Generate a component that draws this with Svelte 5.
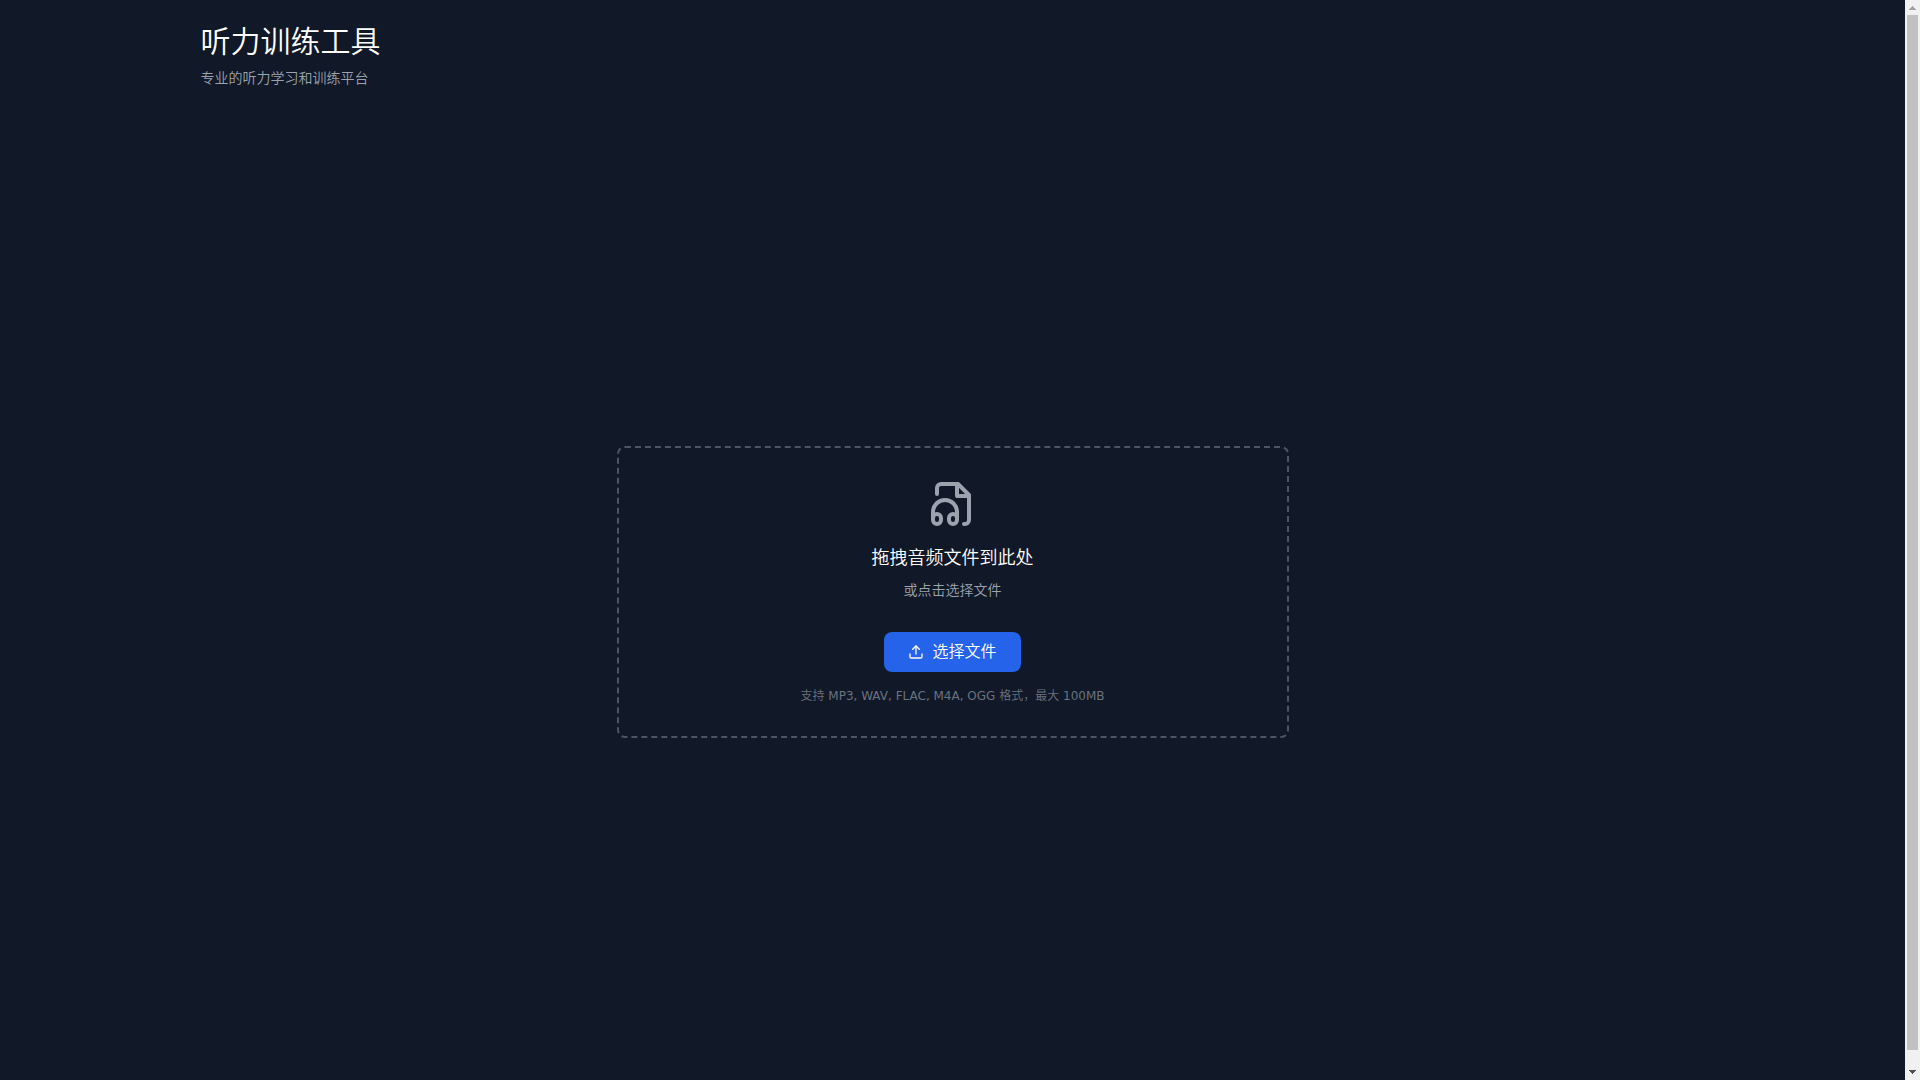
<script>
  let fileInput;
  let fileName = $state('');

  function choose() {
    fileInput.click();
  }

  function picked(event) {
    fileName = event.currentTarget.files[0]?.name ?? '';
  }

  function dropped(event) {
    event.preventDefault();
    fileName = event.dataTransfer.files[0]?.name ?? '';
  }
</script>

<div class="window">
  <div class="viewport">
    <div class="page">
      <header>
        <h1>听力训练工具</h1>
        <p>专业的听力学习和训练平台</p>
      </header>

      <main>
        <section class="dropzone" aria-label="上传音频" ondragover={(e) => e.preventDefault()} ondrop={dropped}>
          <svg class="file-icon" viewBox="0 0 24 24" aria-hidden="true">
            <path d="M17.5 22h.5c.5 0 1-.2 1.4-.6.4-.4.6-.9.6-1.4V7.5L14.5 2H6c-.5 0-1 .2-1.4.6C4.2 3 4 3.5 4 4v3" />
            <polyline points="14 2 14 8 20 8" />
            <path d="M10 20v-1a2 2 0 1 1 4 0v1a2 2 0 1 1-4 0Z" />
            <path d="M6 20v-1a2 2 0 1 0-4 0v1a2 2 0 1 0 4 0Z" />
            <path d="M2 19v-3a6 6 0 0 1 12 0v3" />
          </svg>
          <h2>拖拽音频文件到此处</h2>
          <p class="sub">{fileName || '或点击选择文件'}</p>
          <input bind:this={fileInput} type="file" accept="audio/*" aria-label="选择文件" hidden onchange={picked} />
          <button type="button" onclick={choose}>
            <svg viewBox="0 0 24 24" aria-hidden="true">
              <path d="M21 15v4a2 2 0 0 1-2 2H5a2 2 0 0 1-2-2v-4" />
              <polyline points="17 8 12 3 7 8" />
              <line x1="12" x2="12" y1="3" y2="15" />
            </svg>
            选择文件
          </button>
          <p class="hint">支持 MP3, WAV, FLAC, M4A, OGG 格式，最大 100MB</p>
        </section>
      </main>
    </div>
  </div>

  <div class="scrollbar" aria-hidden="true">
    <svg class="arrow up" viewBox="0 0 15 15"><path d="M7 6h1v1h1v1h1v1h1v1H4V9h1V8h1V7h1z" /></svg>
    <div class="track"><div class="thumb"></div></div>
    <svg class="arrow down" viewBox="0 0 15 15"><path d="M4 5h7v1h-1v1H9v1H8v1H7V8H6V7H5V6H4z" /></svg>
  </div>
</div>

<style>
  :global(body) {
    margin: 0;
    background: #111827;
  }

  .window {
    display: flex;
    height: 100vh;
    background: #111827;
  }

  .viewport {
    flex: 1;
    min-width: 0;
    overflow-y: auto;
    scrollbar-width: none;
    color: #fff;
    font-family: 'DejaVu Sans', 'Noto Sans CJK SC DemiLight', 'Noto Sans CJK SC', sans-serif;
  }

  .page {
    box-sizing: border-box;
    display: flex;
    flex-direction: column;
    max-width: 1536px;
    min-height: calc(100vh + 16px);
    margin: 0 auto;
    padding: 24px 16px 0;
  }

  h1,
  h2,
  p {
    margin: 0;
    font-weight: 400;
  }

  h1 {
    font-size: 30px;
    line-height: 36px;
  }

  header p,
  .sub {
    margin-top: 8px;
    color: #9ca3af;
    font-size: 14px;
    line-height: 20px;
  }

  main {
    flex: 1;
    display: flex;
    align-items: center;
    justify-content: center;
  }

  .dropzone {
    box-sizing: border-box;
    display: flex;
    flex-direction: column;
    align-items: center;
    width: 100%;
    max-width: 672px;
    padding: 32px;
    border: 2px dashed #4b5563;
    border-radius: 8px;
    text-align: center;
  }

  .dropzone svg {
    fill: none;
    stroke: currentColor;
    stroke-width: 2;
    stroke-linecap: round;
    stroke-linejoin: round;
  }

  .file-icon {
    width: 48px;
    height: 48px;
    color: #9ca3af;
  }

  h2 {
    margin-top: 16px;
    font-size: 18px;
    line-height: 28px;
  }

  button {
    display: flex;
    align-items: center;
    gap: 8px;
    margin-top: 32px;
    padding: 8px 24px;
    border: 0;
    border-radius: 8px;
    background: #2563eb;
    color: #fff;
    font: inherit;
    font-size: 16px;
    line-height: 24px;
    cursor: pointer;
  }

  button:hover {
    background: #1d4ed8;
  }

  button svg {
    width: 16px;
    height: 16px;
  }

  .hint {
    margin-top: 16px;
    color: #6b7280;
    font-size: 12px;
    line-height: 16px;
  }

  .scrollbar {
    display: flex;
    flex-direction: column;
    flex: none;
    width: 15px;
    background: #f1f1f1;
  }

  .arrow {
    flex: none;
    width: 15px;
    height: 15px;
    shape-rendering: crispEdges;
  }

  .up {
    fill: #a3a3a3;
  }

  .down {
    fill: #505050;
  }

  .track {
    flex: 1;
    padding: 0 2px 15px;
  }

  .thumb {
    height: 100%;
    background: #c1c1c1;
  }
</style>
